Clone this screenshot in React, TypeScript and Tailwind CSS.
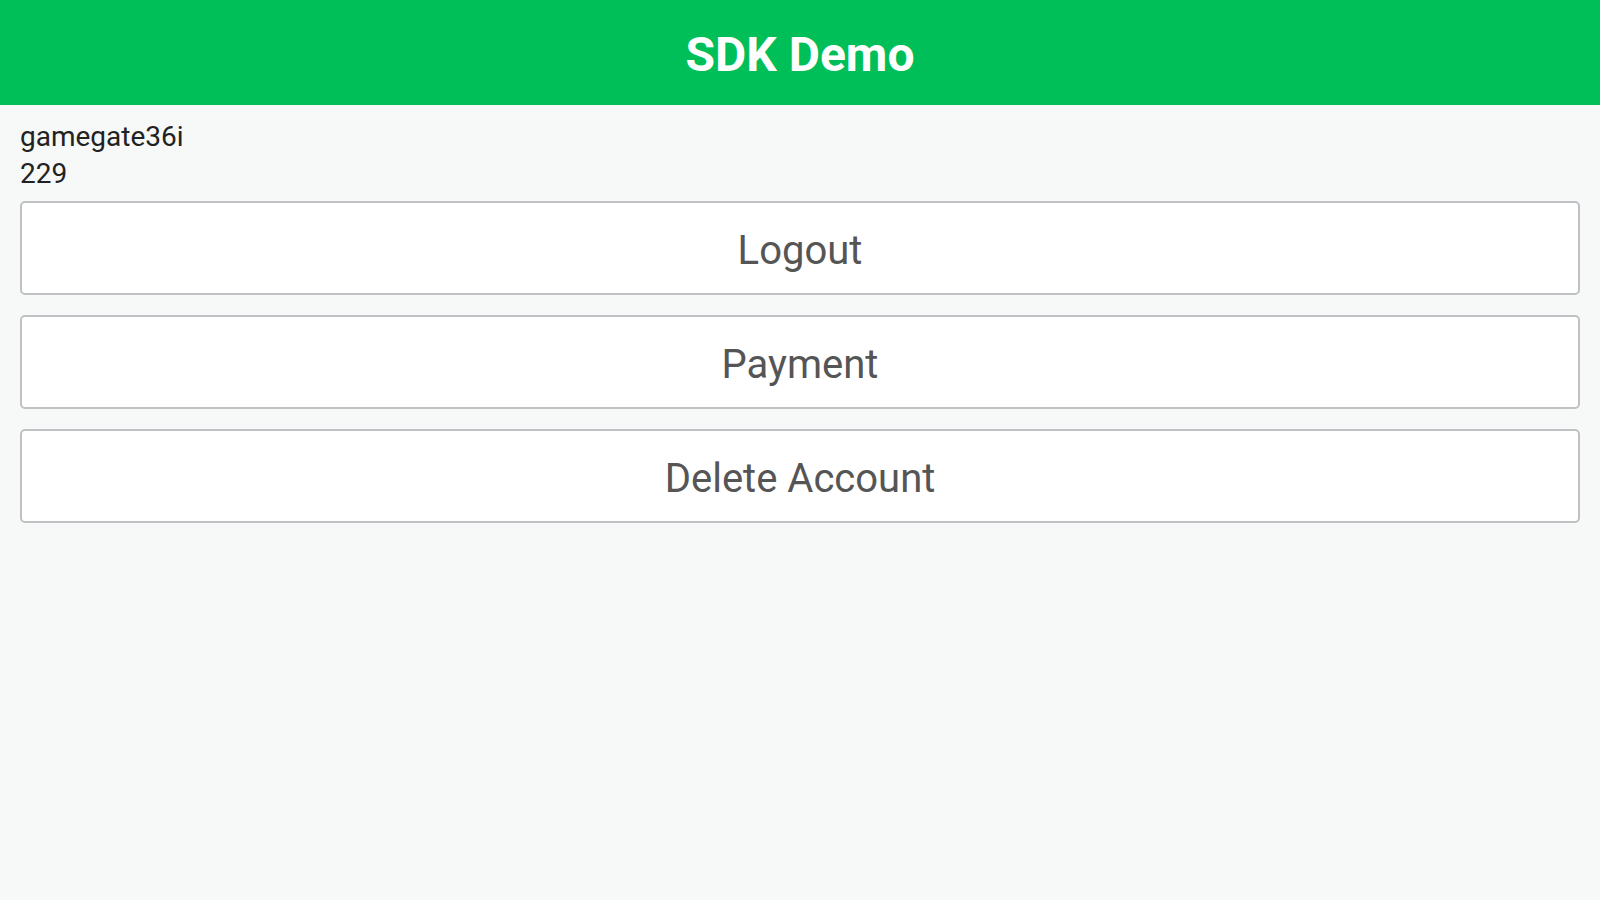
import React from 'react';

const App = () => {
  const actions = ['Logout', 'Payment', 'Delete Account'];

  return (
    <div className="min-h-screen w-full bg-[#f6f9f8] font-['Roboto',sans-serif]">
      <div className="h-[105px] bg-[#00bf59] flex items-center justify-center">
        <h1 className="text-[48px] font-bold text-white leading-none pt-[4px]">SDK Demo</h1>
      </div>

      <div className="px-5 pt-[13px]">
        <div className="text-[28px] leading-[37px] text-[#222]">gamegate36i</div>
        <div className="text-[28px] leading-[37px] text-[#222]">229</div>

        <div className="mt-[9px] flex flex-col gap-[20px]">
          {actions.map((label) => (
            <button
              key={label}
              className="h-[94px] w-full bg-white border-2 border-[#c0c1c5] rounded-[5px] text-[40px] text-[#555] flex items-center justify-center pt-[5px]"
            >
              {label}
            </button>
          ))}
        </div>
      </div>
    </div>
  );
};

export default App;
